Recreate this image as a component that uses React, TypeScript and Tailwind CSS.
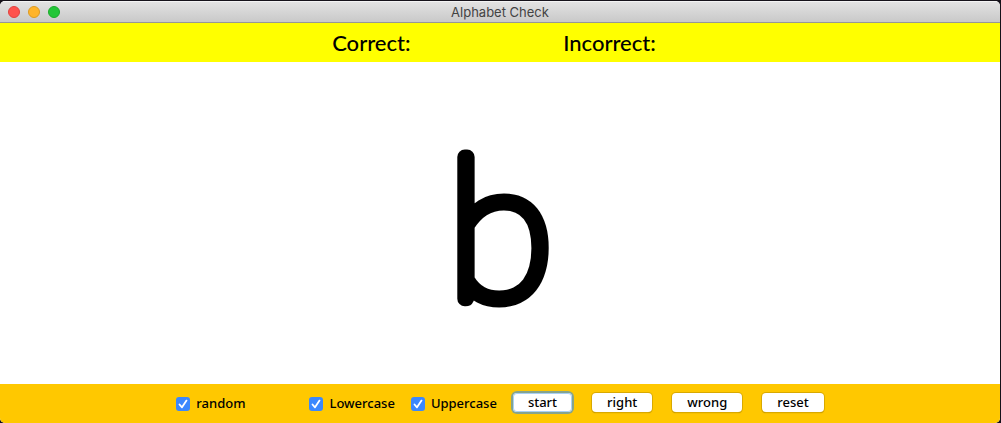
import { useState } from "react";
import type { ReactNode } from "react";

const letters = "bcdefghijklmnopqrstuvwxyza";

function Tick({ label, className = "" }: { label: string; className?: string }) {
  return (
    <label className={`flex items-center gap-1.5 ${className}`}>
      <span className="grid h-3.5 w-3.5">
        <input
          type="checkbox"
          defaultChecked
          className="peer col-start-1 row-start-1 h-3.5 w-3.5 appearance-none rounded-[3px] bg-white checked:bg-[#3b88fd]"
        />
        <svg viewBox="0 0 14 14" className="pointer-events-none invisible col-start-1 row-start-1 h-3.5 w-3.5 peer-checked:visible" fill="none" stroke="white" strokeWidth="1.8" strokeLinecap="round" strokeLinejoin="round">
          <path d="M3.5 7.5 6 10.3 10.5 3.6" />
        </svg>
      </span>
      {label}
    </label>
  );
}

function PushButton({ children, onClick, className = "shadow-[0_0_0_1px_#d9a900,0_1px_1px_#9a7800]" }: { children: ReactNode; onClick?: () => void; className?: string }) {
  return (
    <button type="button" onClick={onClick} className={`h-[19px] rounded-[4px] bg-white px-[15px] leading-[19px] ${className}`}>
      {children}
    </button>
  );
}

export default function App() {
  const [index, setIndex] = useState(0);
  const next = () => setIndex((index + 1) % letters.length);
  return (
    <div className="flex min-h-screen flex-col bg-[#15121a] pt-px pr-px text-black">
      <div className="flex grow flex-col overflow-hidden rounded-[5px] bg-white">
        <header className="grid h-[22px] grid-cols-[1fr_auto_1fr] items-center border-t border-b border-t-[#f3f3f3] border-b-[#979797] bg-linear-to-b from-[#e2e2e2] to-[#c9c9c9] px-2">
          <div className="flex gap-2">
            <button type="button" aria-label="Close" className="h-3 w-3 rounded-full border border-[#e0433f] bg-[#ff524c]" />
            <button type="button" aria-label="Minimize" className="h-3 w-3 rounded-full border border-[#dc9a22] bg-[#ffb429]" />
            <button type="button" aria-label="Zoom" className="h-3 w-3 rounded-full border border-[#1bab2b] bg-[#23c638]" />
          </div>
          <h1 className="font-[Inter,sans-serif] text-[13px] leading-5 text-[#434343]">Alphabet Check</h1>
        </header>
        <div className="flex h-[39px] items-center justify-center bg-[#ffff00] pr-3 font-[Lato,sans-serif] text-[22px] font-medium">
          <span className="w-[231px]">Correct:</span>
          <span>Incorrect:</span>
        </div>
        <main className="flex grow items-center justify-center">
          <svg viewBox="0 0 300 300" className="h-[300px] w-[300px]">
            <text
              x="150"
              y="226"
              textAnchor="middle"
              stroke="black"
              strokeWidth="15"
              strokeLinejoin="round"
              className="font-[Lato,sans-serif] text-[196px] font-thin"
            >
              {letters[index]}
            </text>
          </svg>
        </main>
        <footer className="flex h-[39px] items-center justify-center bg-[#ffc800] font-['Noto_Sans',sans-serif] text-[13px] font-medium">
          <Tick label="random" className="mr-16" />
          <Tick label="Lowercase" className="mr-4" />
          <Tick label="Uppercase" className="mr-4" />
          <div className="flex gap-5 pb-0.5">
            <PushButton onClick={() => setIndex(0)} className="shadow-[inset_0_0_0_1px_#a9d0f5,0_0_0_2px_#86a48d]">start</PushButton>
            <PushButton onClick={next}>right</PushButton>
            <PushButton onClick={next}>wrong</PushButton>
            <PushButton onClick={() => setIndex(0)}>reset</PushButton>
          </div>
        </footer>
      </div>
    </div>
  );
}
